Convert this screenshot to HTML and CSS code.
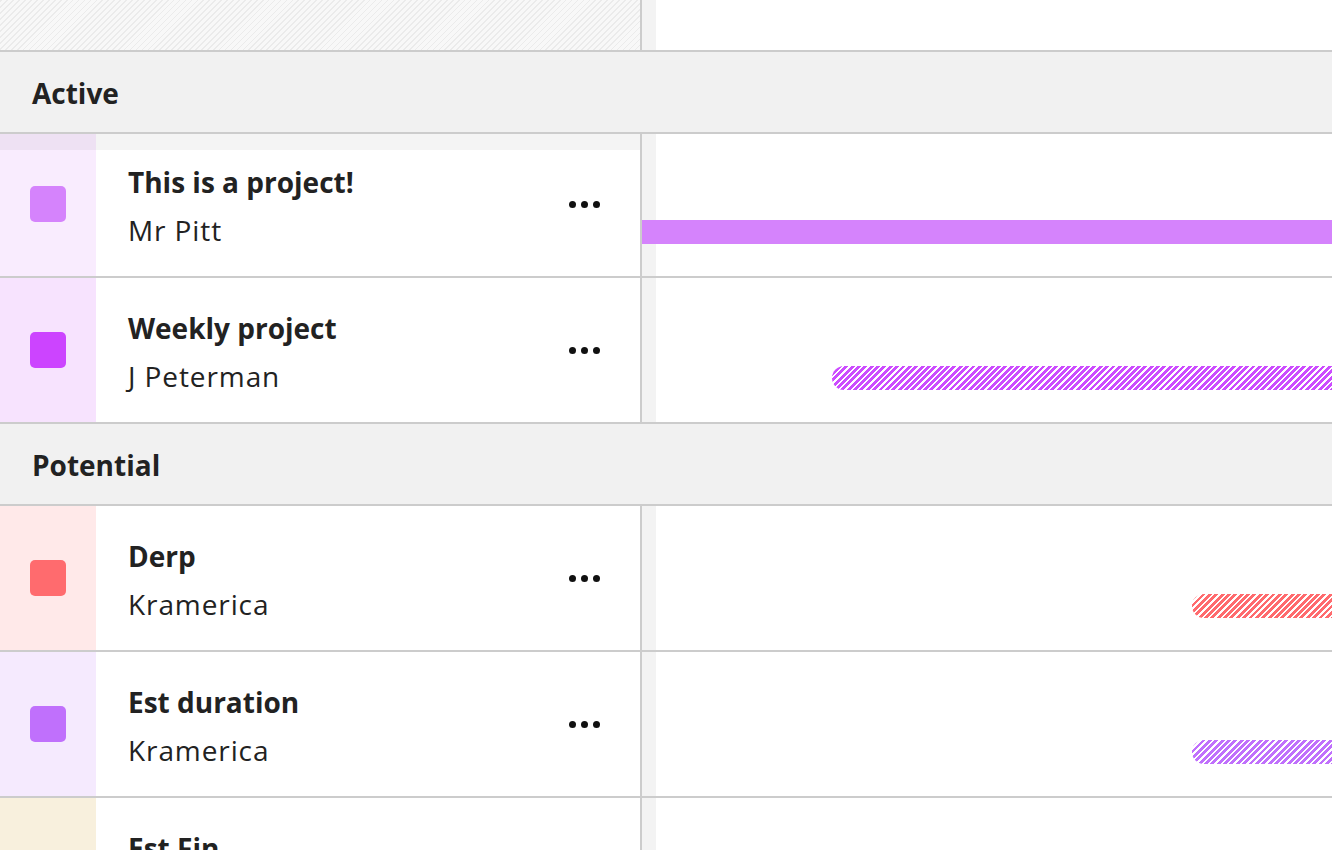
FILE: index.html
```html
<!DOCTYPE html>
<html>
<head>
<meta charset="utf-8">
<link rel="stylesheet" href="styles.css">
</head>
<body>
<div class="board">
  <div class="row row-top">
    <div class="left hatch"></div>
    <div class="timeline"></div>
  </div>

  <div class="group">Active</div>

  <div class="row project first">
    <div class="left">
      <div class="swatch-col" style="background:#f9ecfe"><span class="swatch" style="background:#d583fc"></span></div>
      <div class="info">
        <div class="title">This is a project!</div>
        <div class="client">Mr Pitt</div>
      </div>
      <div class="more"><span></span><span></span><span></span></div>
    </div>
    <div class="timeline">
      <div class="bar solid" style="margin-left:0;width:720px;background:#d583fc"></div>
    </div>
  </div>

  <div class="row project">
    <div class="left">
      <div class="swatch-col" style="background:#f7e3fe"><span class="swatch" style="background:#cc44ff"></span></div>
      <div class="info">
        <div class="title">Weekly project</div>
        <div class="client">J Peterman</div>
      </div>
      <div class="more"><span></span><span></span><span></span></div>
    </div>
    <div class="timeline">
      <div class="bar striped" style="margin-left:190px;width:540px;--c:#cc4cff"></div>
    </div>
  </div>

  <div class="group">Potential</div>

  <div class="row project">
    <div class="left">
      <div class="swatch-col" style="background:#ffe9e9"><span class="swatch" style="background:#ff6b6e"></span></div>
      <div class="info">
        <div class="title">Derp</div>
        <div class="client">Kramerica</div>
      </div>
      <div class="more"><span></span><span></span><span></span></div>
    </div>
    <div class="timeline">
      <div class="bar striped" style="margin-left:550px;width:200px;--c:#ff6b6e"></div>
    </div>
  </div>

  <div class="row project">
    <div class="left">
      <div class="swatch-col" style="background:#f5eafe"><span class="swatch" style="background:#c070fc"></span></div>
      <div class="info">
        <div class="title">Est duration</div>
        <div class="client">Kramerica</div>
      </div>
      <div class="more"><span></span><span></span><span></span></div>
    </div>
    <div class="timeline">
      <div class="bar striped" style="margin-left:550px;width:200px;--c:#c070fc"></div>
    </div>
  </div>

  <div class="row project">
    <div class="left">
      <div class="swatch-col" style="background:#f8f0dd"><span class="swatch" style="background:#e8c36a"></span></div>
      <div class="info">
        <div class="title">Est Fin</div>
        <div class="client">Kramerica</div>
      </div>
      <div class="more"><span></span><span></span><span></span></div>
    </div>
    <div class="timeline"></div>
  </div>
</div>
</body>
</html>
```

FILE: styles.css
```css
html, body {
  margin: 0;
  padding: 0;
  height: 850px;
  overflow: hidden;
  background: #fff;
}

.board {
  width: 1332px;
  font-family: "Open Sans", "Noto Sans", sans-serif;
  color: #222;
}

.row {
  display: flex;
  border-bottom: 2px solid #cccccc;
}

.row-top {
  height: 50px;
}

.left {
  width: 640px;
  flex: 0 0 640px;
  border-right: 2px solid #cccccc;
  display: flex;
  align-items: center;
  position: relative;
}

.hatch {
  background: repeating-linear-gradient(-45deg, #f8f8f8 0 3px, #ebebeb 3px 4.2px);
}

.timeline {
  flex: 1;
  overflow: hidden;
  box-sizing: border-box;
  background: linear-gradient(to right, #f3f3f3 0 14px, #ffffff 14px);
}

.group {
  height: 80px;
  box-sizing: border-box;
  background: #f1f1f1;
  border-bottom: 2px solid #cccccc;
  display: flex;
  align-items: center;
  padding-left: 32px;
  padding-top: 2px;
  font-weight: 700;
  font-size: 28px;
}

.group {
  height: 82px;
}

.project {
  height: 144px;
}

.project.first {
  height: 142px;
}

.project.first .left::before {
  content: "";
  position: absolute;
  left: 0;
  right: 0;
  top: 0;
  height: 16px;
  background: rgba(0, 0, 0, 0.045);
}

.swatch-col {
  width: 96px;
  height: 100%;
  flex: 0 0 96px;
  display: flex;
  align-items: center;
  justify-content: center;
}

.project.first .swatch-col {
  padding-bottom: 2px;
  box-sizing: border-box;
}

.swatch {
  width: 36px;
  height: 36px;
  border-radius: 5px;
}

.info {
  flex: 1;
  padding-left: 32px;
  padding-top: 4px;
  display: flex;
  flex-direction: column;
  gap: 12px;
}

.project.first .info {
  padding-top: 2px;
}

.title {
  font-weight: 700;
  font-size: 28px;
  line-height: 36px;
}

.client {
  font-size: 28px;
  line-height: 36px;
  letter-spacing: 0.9px;
}

.more {
  display: flex;
  gap: 5px;
  margin-right: 40px;
}

.project.first .more {
  margin-top: -2px;
}

.more span {
  width: 7px;
  height: 7px;
  border-radius: 50%;
  background: #111;
}

.project .timeline {
  padding-top: 88px;
}

.project.first .timeline {
  padding-top: 86px;
}

.bar {
  height: 24px;
  flex: none;
}

.striped {
  border-radius: 12px;
  background: repeating-linear-gradient(-45deg, var(--c) 0 2.8px, #ffffff 2.8px 4.5px);
}
```
